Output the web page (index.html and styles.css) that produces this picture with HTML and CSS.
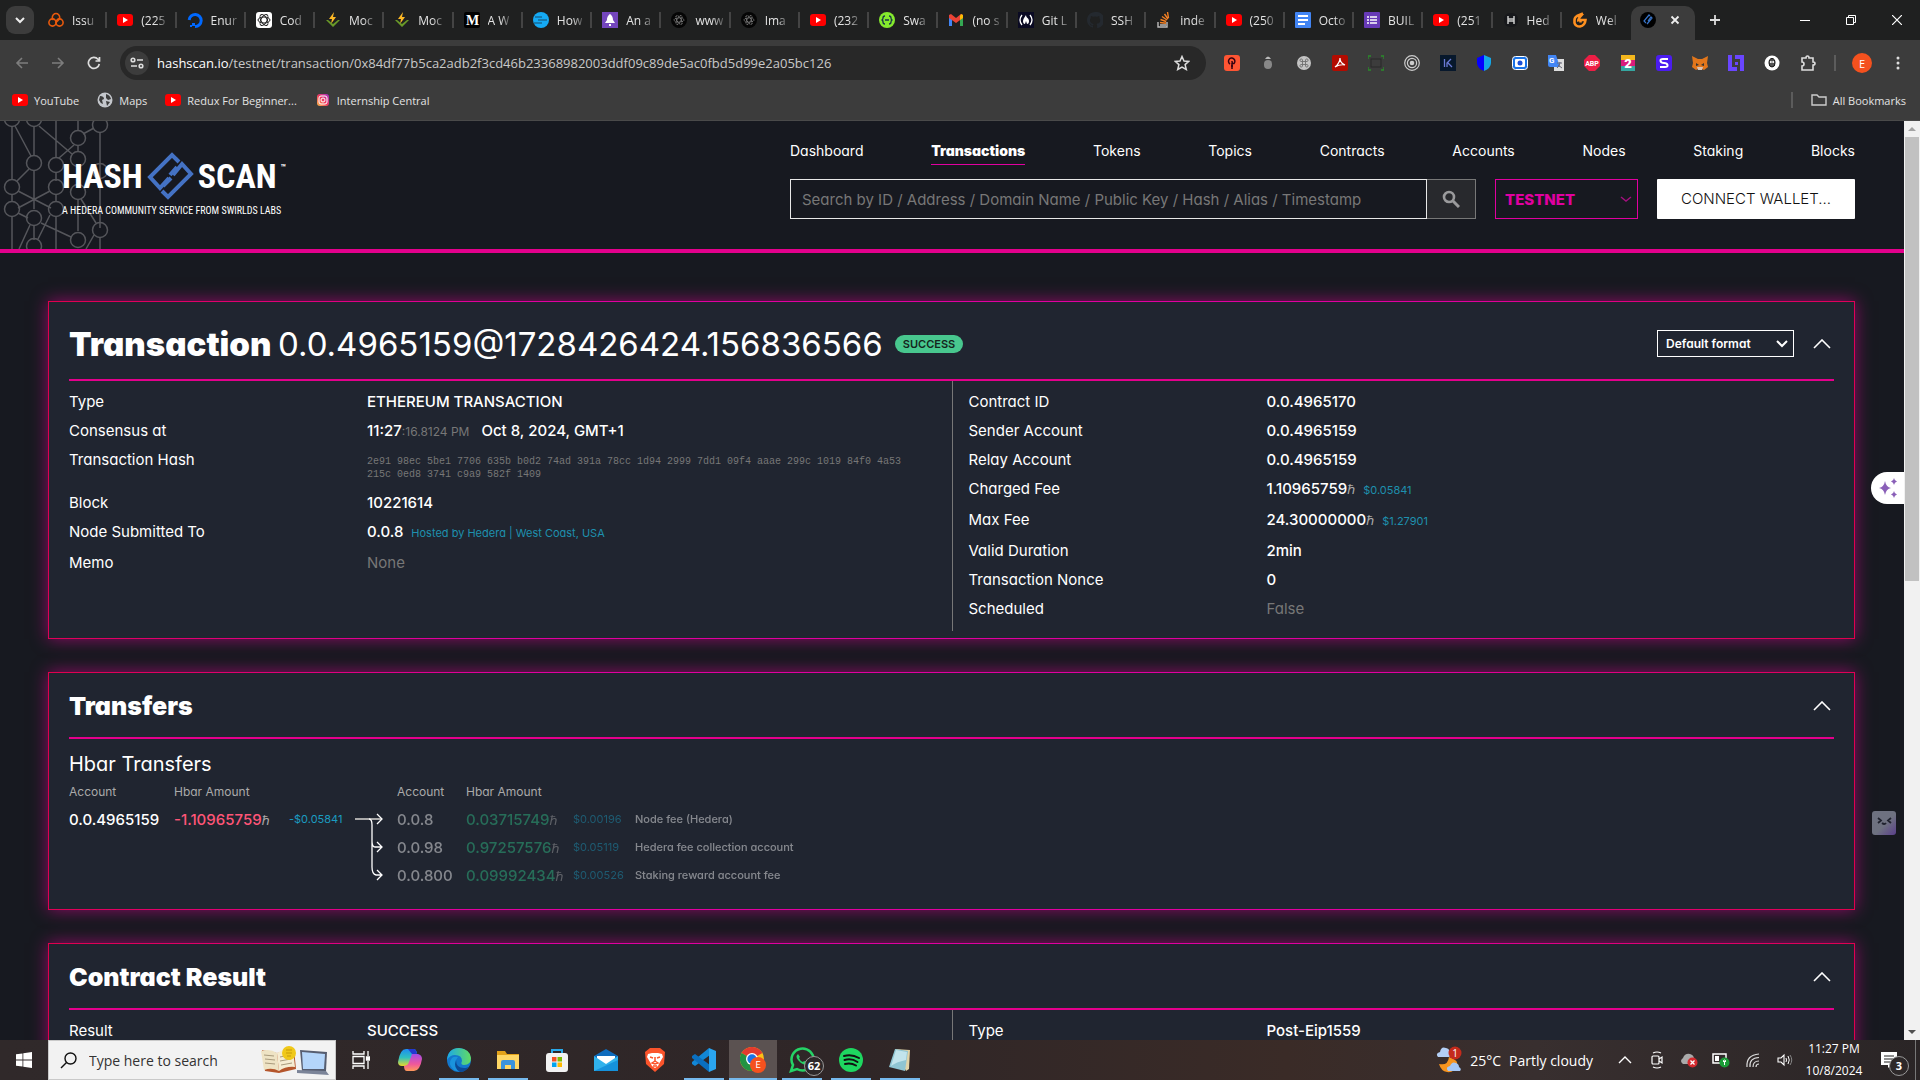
FILE: index.html
```html
<!DOCTYPE html>
<html lang="en">
<head>
<meta charset="utf-8">
<title>HashScan</title>
<link rel="stylesheet" href="styles.css">
</head>
<body>
<svg class="defs" aria-hidden="true">
  <symbol id="yt" viewBox="0 0 16 16"><rect y="2" width="16" height="12" rx="3" fill="#f00"/><path d="M6 5v6l5-3z" fill="#fff"/></symbol>
  <symbol id="moc" viewBox="0 0 16 16"><path d="M9 0 4 7h3l-1 5 5-7H8z" fill="#fdb825"/><path d="M1 8l7 7 7-7-2 0-5 4-5-4z" fill="#6a9a28"/></symbol>
  <symbol id="atom" viewBox="0 0 16 16"><circle cx="8" cy="8" r="8" fill="#050505"/><g fill="none" stroke="#aaa" stroke-width=".8" stroke-dasharray="1 .6"><ellipse cx="8" cy="8" rx="5" ry="2"/><ellipse cx="8" cy="8" rx="5" ry="2" transform="rotate(60 8 8)"/><ellipse cx="8" cy="8" rx="5" ry="2" transform="rotate(120 8 8)"/></g></symbol>
  <symbol id="up" viewBox="0 0 18 10"><path d="M1 9l8-8 8 8" fill="none" stroke="#fff" stroke-width="1.6"/></symbol>
  <symbol id="hs" viewBox="0 0 47 48"><g fill="none" stroke="#4472c4" stroke-width="4" stroke-linejoin="miter"><path d="M32 10 25 3 3 25l10 11 9-10M32 10l-3-3M23 23l7-8"/><path d="M15 39l6 6 23-23-9-10-9 11M16 34l8-8"/></g></symbol>
</svg>

<header class="browser">
  <div class="tabstrip">
    <button class="tabsearch" aria-label="Search tabs"><svg width="10" height="7" viewBox="0 0 10 7"><path d="M1 1l4 4 4-4" fill="none" stroke="#eee" stroke-width="2"/></svg></button>
    <div class="tabs">
      <div class="tab"><svg viewBox="0 0 16 16"><g fill="none" stroke="#e8590c" stroke-width="1.600"><path d="M5.500 8A3.700 3.700 0 1 1 10.500 8L8 10.500"/><circle cx="4.500" cy="10.500" r="3.600"/><circle cx="11.500" cy="10.500" r="3.600"/></g></svg><span>Issu</span></div>
      <div class="tab"><svg><use href="#yt"/></svg><span>(225</span></div>
      <div class="tab"><svg viewBox="0 0 16 16"><path d="M8 14.500A6 6 0 1 0 2.200 8" fill="none" stroke="#0069ff" stroke-width="3"/><path d="M5 11h3v3H5zM3 13h2v2H3z" fill="#0069ff"/></svg><span>Enur</span></div>
      <div class="tab"><svg viewBox="0 0 16 16"><rect width="16" height="16" rx="3" fill="#fff"/><g fill="none" stroke="#222"><ellipse cx="8" cy="8" rx="6" ry="3"/><ellipse cx="8" cy="8" rx="6" ry="3" transform="rotate(60 8 8)"/><ellipse cx="8" cy="8" rx="6" ry="3" transform="rotate(120 8 8)"/></g></svg><span>Cod</span></div>
      <div class="tab"><svg><use href="#moc"/></svg><span>Moc</span></div>
      <div class="tab"><svg><use href="#moc"/></svg><span>Moc</span></div>
      <div class="tab"><svg viewBox="0 0 16 16"><rect width="16" height="16" rx="2" fill="#000"/><text x="2" y="13" font-family="Liberation Serif" font-weight="700" font-size="14" fill="#fff">M</text></svg><span>A W</span></div>
      <div class="tab"><svg viewBox="0 0 16 16"><circle cx="8" cy="8" r="8" fill="#15aaf5"/><path d="M2 5h7M5 8h9M1 11h8" stroke="#174b6b" stroke-width="1.200"/></svg><span>How</span></div>
      <div class="tab"><svg viewBox="0 0 16 16"><rect width="16" height="16" fill="#7446bd"/><path d="M8 2c3 2 3 5 3 6l2 3H3l2-3c0-1 0-4 3-6z" fill="#fff"/><path d="M7 12h2v2H7z" fill="#fff"/></svg><span>An a</span></div>
      <div class="tab"><svg><use href="#atom"/></svg><span>www</span></div>
      <div class="tab"><svg><use href="#atom"/></svg><span>Ima</span></div>
      <div class="tab"><svg><use href="#yt"/></svg><span>(232</span></div>
      <div class="tab"><svg viewBox="0 0 16 16"><circle cx="8" cy="8" r="8" fill="#85ea2d"/><path d="M6 4q-2 0-2 2t-1.500 2q1.500 0 1.500 2t2 2M10 4q2 0 2 2t1.500 2q-1.500 0-1.500 2t-2 2M6 8h4" fill="none" stroke="#173647" stroke-width="1.300"/></svg><span>Swa</span></div>
      <div class="tab"><svg viewBox="0 0 16 16"><path d="M1 14V4h3v10z" fill="#4285f4"/><path d="M12 14V4h3v10z" fill="#34a853"/><path d="M1 3l2-1 5 4 5-4 2 1v3l-7 5-7-5z" fill="#ea4335"/><path d="M12 4l1-2 2 1v3l-3 2z" fill="#fbbc04"/></svg><span>(no s</span></div>
      <div class="tab"><svg viewBox="0 0 16 16"><rect width="16" height="16" fill="#0a0a23"/><path d="M4 3q-4 5 0 10M12 3q4 5 0 10" fill="none" stroke="#fff" stroke-width="1.300"/><path d="M8 3c0 3 3 3 3 6q0 3-2 3l-1-3-1 3q-2 0-2-3 0-2 3-6z" fill="#fff"/></svg><span>Git L</span></div>
      <div class="tab"><svg viewBox="0 0 16 16"><path d="M8 0C3.580 0 0 3.580 0 8c0 3.540 2.290 6.530 5.470 7.590.4.070.55-.17.55-.38v-1.490C3.800 14.200 3.330 12.800 3.330 12.800c-.36-.92-.89-1.200-.89-1.200 1-.3 1.600.8 1.600.8.9 1.200 2 .9 2.100.7l.5-1C3.800 11.500 3 10.300 3 8.100c0-.9.300-1.600.8-2.100l.1-2.100s.7-.2 2.200.8a7.500 7.500 0 0 1 4 0c1.500-1 2.200-.8 2.200-.8l.1 2.100c.500.5.8 1.200.8 2.100 0 3-1.800 3.700-3.600 3.900l.5 1.500v2.200c0 .2.100.5.5.4A8 8 0 0 0 8 0z" fill="#24292f"/></svg><span>SSH</span></div>
      <div class="tab"><svg viewBox="0 0 16 16"><path d="M2 10v5h9v-5M4 13h6" fill="none" stroke="#bcbbbb" stroke-width="1.400"/><path d="M4 10.500l6 .8M4.500 7.500l5.700 2M6 4.500l5 3.500M8.500 2l3.500 5M11.500 0l1 6" stroke="#f48024" stroke-width="1.400"/></svg><span>inde</span></div>
      <div class="tab"><svg><use href="#yt"/></svg><span>(250</span></div>
      <div class="tab"><svg viewBox="0 0 16 16"><rect width="16" height="16" rx="1" fill="#4285f4"/><path d="M3 4h10M3 8h10M3 12h7" stroke="#fff" stroke-width="1.800"/></svg><span>Octo</span></div>
      <div class="tab"><svg viewBox="0 0 16 16"><rect width="16" height="16" rx="1" fill="#673ab7"/><path d="M6 5h7M6 8h7M6 11h7M3 5h2M3 8h2M3 11h2" stroke="#fff" stroke-width="1.600"/></svg><span>BUIL</span></div>
      <div class="tab"><svg><use href="#yt"/></svg><span>(251</span></div>
      <div class="tab"><svg viewBox="0 0 16 16"><rect x="1" y="1" width="14" height="14" rx="6" fill="#17181b"/><path d="M5 4v8M11 4v8M5 7h6M5 9h6" stroke="#ccc" stroke-width="1.500"/></svg><span>Hed</span></div>
      <div class="tab last"><svg viewBox="0 0 16 16"><path d="M11 1.500 5 4Q2.500 5.500 2.500 8v3q1 3.500 5.500 3.500 5-1 5.500-6.500H8.500v2.500M11 1.500 7.500 5.500Q6 8 6.500 9.500" fill="none" stroke="#ff9020" stroke-width="2.600"/></svg><span>Wel</span></div>
      <div class="tab active"><svg viewBox="0 0 16 16"><circle cx="8" cy="8" r="8" fill="#000"/><path d="M6 11 4 9l5-6 1 1M7 12l5-6-1-1-3 4" fill="none" stroke="#3874c8" stroke-width="1.200"/></svg><button aria-label="Close tab"><svg viewBox="0 0 10 10"><path d="M1.500 1.500l7 7M8.500 1.500l-7 7" stroke="#eee" stroke-width="1.800"/></svg></button></div>
    </div>
    <button class="newtab" aria-label="New tab"><svg width="12" height="12" viewBox="0 0 12 12"><path d="M6 1v10M1 6h10" stroke="#ddd" stroke-width="1.800"/></svg></button>
    <div class="wincontrols">
      <button aria-label="Minimize"><svg viewBox="0 0 10 10"><path d="M0 5.500h10" stroke="#fff"/></svg></button>
      <button aria-label="Restore"><svg viewBox="0 0 10 10"><path d="M.5 2.500h7v7h-7zM2.500 2.500v-2h7v7h-2" fill="none" stroke="#fff"/></svg></button>
      <button aria-label="Close"><svg viewBox="0 0 10 10"><path d="M0 0l10 10M10 0L0 10" stroke="#fff" stroke-width="1.200"/></svg></button>
    </div>
  </div>

  <div class="toolbar">
    <button class="nav dim" aria-label="Back"><svg viewBox="0 0 14 14"><path d="M13 7H2M7 2 2 7l5 5" fill="none" stroke="currentColor" stroke-width="1.600"/></svg></button>
    <button class="nav dim" aria-label="Forward"><svg viewBox="0 0 14 14"><path d="M1 7h11M7 2l5 5-5 5" fill="none" stroke="currentColor" stroke-width="1.600"/></svg></button>
    <button class="nav" aria-label="Reload"><svg viewBox="0 0 14 14"><path d="M12.300 8A5.500 5.500 0 1 1 11 3.200l1.500 1.500M12.500 1v4h-4" fill="none" stroke="currentColor" stroke-width="1.700"/></svg></button>
    <div class="omnibox">
      <span class="site"><svg width="14" height="14" viewBox="0 0 14 14"><g fill="none" stroke="#ddd" stroke-width="1.600"><circle cx="3" cy="4" r="1.800"/><path d="M7 4h6M1 10h6"/><circle cx="11" cy="10" r="1.800"/></g></svg></span>
      <span class="url"><b>hashscan.io</b>/testnet/transaction/0x84df77b5ca2adb2f3cd46b23368982003ddf09c89de5ac0fbd5d99e2a05bc126</span>
      <svg class="star" width="16" height="16" viewBox="0 0 16 16"><path d="M8 1.500l2 4.500 4.800.4-3.700 3.200 1.200 4.900L8 12l-4.300 2.500 1.200-4.900L1.200 6.400 6 6z" fill="none" stroke="#ddd" stroke-width="1.500"/></svg>
    </div>
    <div class="exts">
      <svg viewBox="0 0 16 16"><rect width="16" height="16" rx="3" fill="#ff5533"/><path d="M8 14V8M6 9a3.200 3.200 0 1 1 4-.5Q8 9 8 6M7 11h2" fill="none" stroke="#301" stroke-width="1.500"/></svg>
      <svg viewBox="0 0 16 16"><path d="M5 4q3-5 6 0z" fill="#bbb"/><rect x="4" y="5" width="8" height="9" rx="4" fill="#888"/></svg>
      <svg viewBox="0 0 16 16"><circle cx="8" cy="8" r="7" fill="#c4c4c4"/><path d="M6.500 6.500h3v3h-3zM6.500 6.500V5A1.300 1.300 0 1 0 5 6.500zM9.500 6.500H11A1.300 1.300 0 1 0 9.500 5zM9.500 9.500V11a1.300 1.300 0 1 0 1.500-1.500zM6.500 9.500H5A1.300 1.300 0 1 0 6.500 11z" fill="none" stroke="#666" stroke-width=".8"/></svg>
      <svg viewBox="0 0 16 16"><rect width="16" height="16" rx="2" fill="#b30b00"/><path d="M3 12q5-4 5-9 0 5 5 7-5-1-10 2z" fill="none" stroke="#fff" stroke-width="1.200"/></svg>
      <svg viewBox="0 0 16 16"><rect x="3" y="4" width="10" height="8" fill="none" stroke="#292929"/><path d="M0 4V1h3M13 1h3v3M16 12v3h-3M3 15H0v-3" fill="none" stroke="#2a8a2a" stroke-width="1.400"/></svg>
      <svg viewBox="0 0 16 16"><g fill="none" stroke="#ccc" stroke-width="1.200"><circle cx="8" cy="8" r="7.300"/><circle cx="8" cy="8" r="4.600"/></g><circle cx="8" cy="8" r="2.300" fill="#ccc"/></svg>
      <svg viewBox="0 0 16 16"><rect width="16" height="16" fill="#07182c"/><path d="M4.500 4v8M7 12V8l4-4M8 8l4 4" fill="none" stroke="#6a7ad6" stroke-width="1.300"/></svg>
      <svg viewBox="0 0 16 16"><path d="M8 0 1 3v5q0 5 7 8z" fill="#0500ff"/><path d="M8 0l7 3v5q0 5-7 8z" fill="#13a7e8"/></svg>
      <svg viewBox="0 0 16 16"><rect x=".5" y="1.500" width="15" height="13" rx="3" fill="#1a73e8" stroke="#fff"/><rect x="3" y="4" width="10" height="8" rx="1" fill="#fff"/><circle cx="8" cy="8" r="2.500" fill="#1a4fd8"/></svg>
      <svg viewBox="0 0 16 16"><rect x="6" y="4" width="10" height="12" fill="#ddd"/><path d="M0 0h8l4 12H2q-2 0-2-2z" fill="#4285f4"/><text x="1" y="8" font-family="Roboto" font-weight="700" font-size="8" fill="#fff">G</text><path d="M9 8h5M12 7q0 4-3 6M10 10l4 3" stroke="#667" fill="none"/></svg>
      <svg viewBox="0 0 16 16"><path d="M5 0h6l5 5v6l-5 5H5l-5-5V5z" fill="#ed1e45"/><text x="8" y="11" text-anchor="middle" font-family="Roboto" font-weight="700" font-size="7" fill="#fff">ABP</text></svg>
      <svg viewBox="0 0 16 16"><path d="M1 0h14v6H1z" fill="#f4b71d"/><path d="M1 5h14v6H1z" fill="#d91c7b"/><path d="M1 11h14v5H1z" fill="#35a6a0"/><text x="8" y="13" text-anchor="middle" font-family="Roboto" font-weight="900" font-size="13" fill="#fff">2</text></svg>
      <svg viewBox="0 0 16 16"><rect width="16" height="16" rx="3" fill="#4b1cf0"/><path d="M12 4H7Q4 4 4.500 6t3.500 2 3.500 2-2.500 2H4" fill="none" stroke="#fff" stroke-width="2"/></svg>
      <svg viewBox="0 0 16 16"><path d="M0 1l6 3h4l6-3-1 7 1 4-4 3-2-1H6l-2 1-4-3 1-4z" fill="#e2761b"/><path d="M4 8l3 2-3 1zM12 8l-3 2 3 1z" fill="#333"/><path d="M5 12h6l-1 3H6z" fill="#d7c1b3"/></svg>
      <svg viewBox="0 0 16 16"><path d="M0 0h4v12h5v4H0zM16 16h-4V4H7V0h9zM7 7h3v3H7z" fill="#6a46ff"/></svg>
      <svg viewBox="0 0 16 16"><circle cx="8" cy="8" r="7.500" fill="#fff"/><path d="M8 3.500q3 0 3 4.500 0 4-3 4T5 8q0-4.500 3-4.500z" fill="#555" stroke="#111"/><circle cx="6.800" cy="7" r="1" fill="#fff"/><circle cx="9.200" cy="7" r="1" fill="#fff"/></svg>
      <svg viewBox="0 0 16 16"><path d="M2 3h4q0-2 1.500-2T9 3h4v4q2 0 2 1.500T13 10v5H2v-4q2 0 2-2T2 7z" fill="none" stroke="#ddd" stroke-width="1.600"/></svg>
    </div>
    <i class="vsep"></i>
    <span class="avatar">E</span>
    <button class="dots" aria-label="Menu"><svg width="4" height="14" viewBox="0 0 4 14"><circle cx="2" cy="2" r="1.500" fill="#ddd"/><circle cx="2" cy="7" r="1.500" fill="#ddd"/><circle cx="2" cy="12" r="1.500" fill="#ddd"/></svg></button>
  </div>

  <nav class="bookmarks">
    <a href="#"><svg><use href="#yt"/></svg>YouTube</a>
    <a href="#"><svg viewBox="0 0 16 16"><circle cx="8" cy="8" r="7.500" fill="#c4c7cc"/><path d="M3 4q4 0 4 3l-2 1 1 4q-3-1-4-4zM9 2q4 1 5 5l-3 1-2-2zM9 9l4 1-3 4z" fill="#3c3c3c"/></svg>Maps</a>
    <a href="#"><svg><use href="#yt"/></svg>Redux For Beginner...</a>
    <a href="#"><svg viewBox="0 0 16 16"><linearGradient id="ig" x1="0" y1="1" x2="1" y2="0"><stop stop-color="#fdc04a"/><stop offset=".5" stop-color="#ee3a63"/><stop offset="1" stop-color="#a033c8"/></linearGradient><rect x="2" y="2" width="12" height="12" rx="3" fill="url(#ig)"/><rect x="4" y="4" width="8" height="8" rx="2" fill="none" stroke="#fff"/><circle cx="8" cy="8" r="2" fill="none" stroke="#fff"/></svg>Internship Central</a>
    <i class="vsep push"></i>
    <a href="#"><svg viewBox="0 0 16 16"><path d="M1 13V3h5l2 2h7v8z" fill="none" stroke="#ccc" stroke-width="1.400"/></svg>All Bookmarks</a>
  </nav>
</header>

<div class="viewport">
  <div class="site-page">
    <header class="site-header">
      <svg class="mesh" width="112" height="128" viewBox="0 0 112 128" fill="none" stroke="#55565b" stroke-width="1.500">
        <path d="M12 5v54M12 74v6M12 96v32M34 5v30M34 50v38M34 105v14M56 0v36M56 52v8M56 74v6M56 96v32M78 0v10M78 24v6M78 78v32M100 12v95M100 117v11M15 5l16 30M39 5l33 28M83 13l11-6M74 24 59 37M29 48 17 60M18 70l33 17M50 70 18 87M18 92l10 5M41 102l30 14M50 94l-12 24M30 104l-11 24M81 78l15 24M94 114l-8 14"/>
        <circle cx="12" cy="-2" r="7.500"/><circle cx="34" cy="-2" r="7.500"/><circle cx="100" cy="4" r="7.500"/><circle cx="78" cy="17" r="7.500"/><circle cx="78" cy="38" r="7.500"/><circle cx="34" cy="42" r="7.500"/><circle cx="56" cy="44" r="7.500"/><circle cx="12" cy="66" r="7.500"/><circle cx="56" cy="66" r="7.500"/><circle cx="12" cy="88" r="7.500"/><circle cx="56" cy="88" r="7.500"/><circle cx="34" cy="97" r="7.500"/><circle cx="78" cy="71" r="7.500"/><circle cx="100" cy="109" r="7.500"/><circle cx="78" cy="119" r="7.500"/><circle cx="34" cy="125" r="7.500"/><circle cx="100" cy="50" r="7.500"/>
      </svg>
      <a class="logo" href="#">
        <span class="mark"><span>HASH</span><svg width="47" height="48"><use href="#hs"/></svg><span>SCAN</span><sup>™</sup></span>
        <span class="tagline">A HEDERA COMMUNITY SERVICE FROM SWIRLDS LABS</span>
      </a>
      <div class="head-right">
        <nav class="mainnav">
          <a href="#">Dashboard</a><a href="#" class="current">Transactions</a><a href="#">Tokens</a><a href="#">Topics</a><a href="#">Contracts</a><a href="#">Accounts</a><a href="#">Nodes</a><a href="#">Staking</a><a href="#">Blocks</a>
        </nav>
        <form class="searchrow">
          <input type="text" aria-label="Search" placeholder="Search by ID / Address / Domain Name / Public Key / Hash / Alias / Timestamp">
          <button type="button" class="go" aria-label="Search"><svg width="18" height="18" viewBox="0 0 18 18"><circle cx="7" cy="7" r="5" fill="none" stroke="#9a9a9c" stroke-width="2.600"/><path d="M11 11l6 6" stroke="#9a9a9c" stroke-width="3"/></svg></button>
          <span class="net"><select aria-label="Network"><option>TESTNET</option></select><svg width="12" height="7" viewBox="0 0 12 7"><path d="M1 1l5 4 5-4" fill="none" stroke="#a3107e" stroke-width="1.400"/></svg></span>
          <button type="button" class="wallet">CONNECT WALLET...</button>
        </form>
      </div>
    </header>

    <main>
      <section class="card">
        <div class="card-head big">
          <h1>Transaction <span>0.0.4965159@1728426424.156836566</span></h1>
          <span class="badge">SUCCESS</span>
          <span class="format"><select aria-label="Format"><option>Default format</option></select><svg width="12" height="8" viewBox="0 0 12 8"><path d="M1 1l5 5 5-5" fill="none" stroke="#fff" stroke-width="2"/></svg></span>
          <button class="fold" aria-label="Collapse"><svg width="18" height="10"><use href="#up"/></svg></button>
        </div>
        <div class="split">
          <dl>
            <dt>Type</dt><dd>ETHEREUM TRANSACTION</dd>
            <dt>Consensus at</dt><dd>11:27<small class="grey">:16.8124 PM</small><span class="date">Oct 8, 2024, GMT+1</span></dd>
            <dt class="tall">Transaction Hash</dt><dd class="hash">2e91 98ec 5be1 7706 635b b0d2 74ad 391a 78cc 1d94 2999 7dd1 09f4 aaae 299c 1019 84f0 4a53 215c 0ed8 3741 c9a9 582f 1409</dd>
            <dt>Block</dt><dd>10221614</dd>
            <dt class="fee">Node Submitted To</dt><dd class="fee">0.0.8<small class="blue">Hosted by Hedera | West Coast, USA</small></dd>
            <dt>Memo</dt><dd class="none">None</dd>
          </dl>
          <dl>
            <dt>Contract ID</dt><dd>0.0.4965170</dd>
            <dt>Sender Account</dt><dd>0.0.4965159</dd>
            <dt>Relay Account</dt><dd>0.0.4965159</dd>
            <dt class="fee">Charged Fee</dt><dd class="fee">1.10965759<i class="h">ℏ</i><small class="blue">$0.05841</small></dd>
            <dt class="fee">Max Fee</dt><dd class="fee">24.30000000<i class="h">ℏ</i><small class="blue">$1.27901</small></dd>
            <dt>Valid Duration</dt><dd>2min</dd>
            <dt>Transaction Nonce</dt><dd>0</dd>
            <dt>Scheduled</dt><dd class="none">False</dd>
          </dl>
        </div>
      </section>

      <section class="card">
        <div class="card-head"><h2>Transfers</h2><button class="fold" aria-label="Collapse"><svg width="18" height="10"><use href="#up"/></svg></button></div>
        <h3>Hbar Transfers</h3>
        <table class="transfers">
          <colgroup><col class="c1"><col class="c2"><col class="c3"><col class="c4"><col class="c5"><col class="c6"><col class="c7"><col></colgroup>
          <thead><tr><th>Account</th><th>Hbar Amount</th><th></th><th></th><th>Account</th><th>Hbar Amount</th><th></th><th></th></tr></thead>
          <tbody>
            <tr><td>0.0.4965159</td><td class="red">-1.10965759<i class="h">ℏ</i></td><td class="usd">-$0.05841</td>
              <td rowspan="3"><svg class="arrows" width="28" height="84" viewBox="0 0 28 84" fill="none" stroke="#fff"><path d="M0 14h27" stroke="#aaa" stroke-width="2"/><path d="M14 14q3 0 3 6v16q0 6 3 6h7M17 34v28q0 7 4 8h6M22 9l5 5-5 5M22 37l5 5-5 5M22 65l5 5-5 5" stroke-width="1.300"/></svg></td>
              <td class="dim">0.0.8</td><td class="dim green">0.03715749<i class="h">ℏ</i></td><td class="dim usd">$0.00196</td><td class="dim note">Node fee (Hedera)</td></tr>
            <tr><td></td><td></td><td></td><td class="dim">0.0.98</td><td class="dim green">0.97257576<i class="h">ℏ</i></td><td class="dim usd">$0.05119</td><td class="dim note">Hedera fee collection account</td></tr>
            <tr><td></td><td></td><td></td><td class="dim">0.0.800</td><td class="dim green">0.09992434<i class="h">ℏ</i></td><td class="dim usd">$0.00526</td><td class="dim note">Staking reward account fee</td></tr>
          </tbody>
        </table>
      </section>

      <section class="card">
        <div class="card-head"><h2>Contract Result</h2><button class="fold" aria-label="Collapse"><svg width="18" height="10"><use href="#up"/></svg></button></div>
        <div class="split">
          <dl><dt>Result</dt><dd>SUCCESS</dd></dl>
          <dl><dt>Type</dt><dd>Post-Eip1559</dd></dl>
        </div>
      </section>
    </main>
  </div>
  <div class="scrollbar"><svg width="8" height="4" viewBox="0 0 8 4"><path d="M0 4l4-4 4 4z" fill="#a3a3a3"/></svg><div class="track"><div class="thumb"></div></div><svg width="8" height="4" viewBox="0 0 8 4"><path d="M0 0l4 4 4-4z" fill="#505050"/></svg></div>
  <button class="spark" aria-label="Assistant"><svg width="20" height="20" viewBox="0 0 20 20" fill="#8a5fb8"><path d="M7 3q1 6 6 7-5 1-6 7-1-6-6-7 5-1 6-7zM16 0q.5 3 3 3.500-2.500.5-3 3.500-.5-3-3-3.500 2.500-.5 3-3.500zM16 13q.5 3 3 3.500-2.500.5-3 3.500-.5-3-3-3.500 2.500-.5 3-3.500z"/></svg></button>
  <button class="face" aria-label="Helper"><svg width="24" height="24" viewBox="0 0 24 24"><path d="M6 7l3 2.500L6 12M19 7l-3 2.500 3 2.500M10 12q2.500 2 4 0" fill="none" stroke="#20222e" stroke-width="1.800"/></svg></button>
</div>

<footer class="taskbar">
  <button class="start" aria-label="Start"><svg width="16" height="16" viewBox="0 0 16 16" fill="#fff"><path d="M0 2.300 6.500 1.400V7.600H0zM7.300 1.300 16 0v7.600H7.300zM0 8.400h6.500v6.200L0 13.700zM7.300 8.400H16V16l-8.700-1.300z"/></svg></button>
  <label class="tasksearch">
    <svg width="17" height="17" viewBox="0 0 17 17"><circle cx="10.500" cy="6.500" r="5.500" fill="none" stroke="#111" stroke-width="1.400"/><path d="M6.500 10.500 1 16" stroke="#111" stroke-width="1.500"/></svg>
    <input type="text" placeholder="Type here to search">
    <svg width="70" height="30" viewBox="0 0 70 30"><path d="M2 5l15 3 17-4 2 20-17 4-14-2z" fill="#b5562c"/><path d="M1 6q9-3 16 2l2 18q-7-4-15-1z" fill="#eee3c4"/><path d="M17 8q7-4 16-3l2 17q-9-1-16 4z" fill="#f5ecd2"/><path d="M4 10l10 1M5 14l10 1M5 18l10 1M20 12l10-2M20 16l11-2M21 20l11-2" stroke="#a89a7c"/><circle cx="29" cy="8" r="7" fill="#f0c818"/><path d="M26 5h6M26 8h6M27 11h4" stroke="#c79a08"/><path d="M40 5l27 2-1 19H42z" fill="#565d70"/><path d="M42 7l23 2-1 15H43z" fill="#b4d5fa"/><path d="M37 25l29 1 3 4-32-2z" fill="#7b8498"/></svg>
  </label>
  <div class="apps">
    <button aria-label="Task view"><svg width="18" height="20" viewBox="0 0 18 20" fill="none" stroke="#fff" stroke-width="1.300"><path d="M1 1v3h11V1M1 6.500h11v7H1zM1 19v-3h11v3M16 1v5M16 11v8"/><path d="M14.500 7h3v3h-3z" fill="#fff"/></svg></button>
    <button aria-label="Copilot"><svg width="24" height="24" viewBox="0 0 24 24"><linearGradient id="cpa" x1="0" y1="0" x2="0" y2="1"><stop stop-color="#1d8cf0"/><stop offset=".5" stop-color="#2fc0c0"/><stop offset="1" stop-color="#e8d92a"/></linearGradient><linearGradient id="cpb" x1="0" y1="0" x2="0" y2="1"><stop stop-color="#a34be8"/><stop offset=".6" stop-color="#f0589a"/><stop offset="1" stop-color="#ff9a5a"/></linearGradient><path d="M8 1h8q2 0 3 4l-4 1-3 10q-1 2-3 2H4q-4 0-4-4Q2 1 8 1z" fill="url(#cpa)"/><path d="M16 23H9q-3 0-3-5l3-1q1 0 2-3l3-8h6q4 1 4 5-2 12-8 12z" fill="url(#cpb)"/><path d="M10 1h6q2 0 3 5h-5z" fill="#2338d0"/></svg></button>
    <button class="open" aria-label="Edge"><svg width="24" height="24" viewBox="0 0 24 24"><linearGradient id="eg"><stop stop-color="#1ba8e8"/><stop offset="1" stop-color="#62dc62"/></linearGradient><circle cx="12" cy="12" r="12" fill="#1377cc"/><path d="M0 12Q1 0 12 0q11 1 12 10 0 7-7 7-4 0-2-4 0-6-7-6-5 0-8 5z" fill="url(#eg)"/><path d="M9 12q-3 9 6 11-4 1-8-1-7-6-2-12 2-2 6-1z" fill="#1a93dd"/><path d="M9 12q0 8 8 8 4 0 5-2-3 6-9 6-7-4-4-12z" fill="#0c4a96"/></svg></button>
    <button class="open" aria-label="File Explorer"><svg width="24" height="24" viewBox="0 0 24 24"><path d="M1 3h8l2 3h12v15H1z" fill="#e3a21a"/><path d="M1 7h22v14H1z" fill="#ffd765"/><path d="M5 21v-7q0-2 2-2h10q2 0 2 2v7h-4v-4H9v4z" fill="#3a93dc"/></svg></button>
    <button aria-label="Store"><svg width="24" height="24" viewBox="0 0 24 24"><path d="M7 6V2h10v4" fill="none" stroke="#29a9ea" stroke-width="2"/><rect x="1" y="5" width="22" height="19" rx="3" fill="#f2f2f2"/><path d="M7 9h4.500v4.500H7z" fill="#f25022"/><path d="M12.500 9H17v4.500h-4.500z" fill="#7fba00"/><path d="M7 14.500h4.500V19H7z" fill="#00a4ef"/><path d="M12.500 14.500H17V19h-4.500z" fill="#ffb900"/></svg></button>
    <button aria-label="Mail"><svg width="24" height="24" viewBox="0 0 24 24"><path d="M0 8 12 1l12 7v15H0z" fill="#0f6cbd"/><path d="M3 8h18v8H3z" fill="#fff"/><path d="M0 8l12 8 12-8v15H0z" fill="#30b2ec"/><path d="M0 23l24-11v11z" fill="#1592dc"/></svg></button>
    <button aria-label="Brave"><svg width="22" height="24" viewBox="0 0 22 24"><path d="M6 0h10l5 4-1 12-9 8-9-8L1 4z" fill="#fb542b"/><path d="M4 6l4-1h6l4 1 1 3-3 5-2 4-3 2-3-2-2-4-3-5z" fill="#fff"/><path d="M6 9l3 1M16 9l-3 1M11 9v4l-3 2 3 1 3-1-3-2M9 18h4" fill="none" stroke="#fb542b" stroke-width="1.500"/></svg></button>
    <button class="open" aria-label="VS Code"><svg width="24" height="24" viewBox="0 0 24 24"><path d="M17 0l1 7L3 18l-3-2v-2z" fill="#1287d6"/><path d="M17 24l1-7L3 6 0 8v2z" fill="#0a6fc0"/><path d="M17 0l7 3v18l-7 3z" fill="#2aa5f0"/></svg></button>
    <button class="open current" aria-label="Chrome"><svg width="26" height="26" viewBox="0 0 26 26"><circle cx="12" cy="12" r="12" fill="#fbc116"/><path d="M12 12 1.600 6A12 12 0 0 1 22.400 6z" fill="#e33b2e"/><path d="M12 12 1.600 6A12 12 0 0 0 12 24l5-9z" fill="#229342"/><circle cx="12" cy="12" r="6" fill="#fff"/><circle cx="12" cy="12" r="4.700" fill="#1a73e8"/><circle cx="18" cy="18" r="8" fill="#f4511e"/><text x="18" y="21" text-anchor="middle" font-family="Roboto" font-size="9" fill="#fff">E</text></svg></button>
    <button class="open wa" aria-label="WhatsApp"><svg width="26" height="26" viewBox="0 0 26 26"><path d="M2 24l2-6a11 11 0 1 1 4 4z" fill="none" stroke="#25d366" stroke-width="2.500"/><path d="M9 7q-3 2 0 6t7 5q3-1 2-3l-3-1-1 1q-3-1-4-4l1-1z" fill="#25d366"/></svg><b>62</b></button>
    <button class="open" aria-label="Spotify"><svg width="24" height="24" viewBox="0 0 24 24"><circle cx="12" cy="12" r="12" fill="#1ed760"/><path d="M5 8q8-2 15 2M5.500 12q7-2 13 2M6 16q6-1.500 11 1.500" fill="none" stroke="#111" stroke-width="2" stroke-linecap="round"/></svg></button>
    <button class="open" aria-label="Notepad"><svg width="24" height="24" viewBox="0 0 24 24"><path d="M7 1l15 1-1 19-3 2z" fill="#e0d3a8"/><path d="M7 1l13 2-3 20L1 19z" fill="#8fc5d3"/><path d="M8 2l11 2-1 8Q8 14 3 18z" fill="#c2e4ec"/></svg></button>
  </div>
  <div class="tray">
    <div class="weather"><svg width="26" height="28" viewBox="0 0 26 28"><path d="M3 18q9 2 10-7 10 3 8 9-3 7-10 6-6-1-8-8z" fill="#f7941e"/><path d="M2 11q-3-4 2-5 1-6 6-4 4 1 3 4 3 3 0 5z" fill="#b3cff5"/><path d="M12 25q-3-4 2-5 2-5 6-3 3 1 3 4 3 2 1 4z" fill="#a5c7f5"/><circle cx="19" cy="7" r="6.500" fill="#c42b1c"/><text x="19" y="11" text-anchor="middle" font-family="Open Sans" font-size="10" fill="#fff">1</text></svg><span>25°C</span><span>Partly cloudy</span></div>
    <button aria-label="Hidden icons"><svg width="14" height="8" viewBox="0 0 14 8"><path d="M1 7l6-6 6 6" fill="none" stroke="#fff" stroke-width="1.400"/></svg></button>
    <button aria-label="Meet now"><svg width="14" height="18" viewBox="0 0 14 18"><g fill="none" stroke="#fff" stroke-width="1.200"><rect x="2" y="5" width="7" height="8" rx="1"/><path d="M9 8l3-2v6l-3-2M3 2q4-2 8 0M3 16q4 2 8 0"/></g></svg></button>
    <button aria-label="OneDrive"><svg width="18" height="16" viewBox="0 0 18 16"><path d="M3 12q-4-3 0-6 2-5 7-4 4 1 4 5l-3 5z" fill="#aaa"/><circle cx="12.500" cy="10.500" r="5" fill="#d42a2f"/><path d="M10.500 8.500l4 4M14.500 8.500l-4 4" stroke="#fff" stroke-width="1.300"/></svg></button>
    <button aria-label="Battery"><svg width="18" height="16" viewBox="0 0 18 16"><path d="M1 2h13v9H1z" fill="none" stroke="#fff" stroke-width="1.500"/><path d="M3 4h4v5H3z" fill="#fff"/><circle cx="12.500" cy="10.500" r="5" fill="#1b9c37"/><path d="M12.500 13V9M11 9q1.500-2 3 0-1.500 3-3 0z" stroke="#fff" fill="none"/></svg></button>
    <button aria-label="Wi-Fi"><svg width="16" height="16" viewBox="0 0 16 16"><g fill="none" stroke="#ddd" stroke-width="1.200"><path d="M2 15Q1 3 14 2M5 15Q4 6 14 5.500M8 15q0-6 6-6M11 15q0-3 3-3"/></g></svg></button>
    <button aria-label="Volume"><svg width="16" height="14" viewBox="0 0 16 14"><path d="M1 5h3l3-3v10L4 9H1z" fill="none" stroke="#fff" stroke-width="1.100"/><path d="M9 5q1 2 0 4M11 3q2.500 4 0 8" fill="none" stroke="#fff"/><path d="M13 2q3.500 5 0 10" fill="none" stroke="#888"/></svg></button>
    <div class="clock"><span>11:27 PM</span><span>10/8/2024</span></div>
    <button class="notif" aria-label="Notifications"><svg width="18" height="18" viewBox="0 0 18 18"><path d="M1 1h16v13h-6l-3 3v-3H1z" fill="#fff"/><path d="M4 5h10M4 8h10M4 11h6" stroke="#222" stroke-width="1.200"/></svg><b>3</b></button>
  </div>
</footer>
</body>
</html>
```
FILE: styles.css
```css
* { box-sizing: border-box; }
html, body { height: 100%; }
body {
  margin: 0;
  display: flex;
  flex-direction: column;
  overflow: hidden;
  background: #171920;
  color: #fff;
  font-family: "Open Sans", "Noto Sans", sans-serif;
}
button, input, select { font: inherit; color: inherit; }
button { border: 0; padding: 0; background: none; display: flex; align-items: center; justify-content: center; }
a { color: inherit; text-decoration: none; }
svg { display: block; flex: none; }
.defs { position: absolute; width: 0; height: 0; }

/* Browser frame */
.browser { background: #3c3c3c; border-bottom: 1px solid #4a4a4a; flex: none; font-size: 12px; color: #e3e3e3; }
.tabstrip { display: flex; align-items: center; height: 40px; background: #1f2020; padding-left: 6px; }
.tabsearch { width: 28px; height: 28px; border-radius: 9px; background: #3c3c3c; margin-right: 4px; }
.tabs { flex: 1; display: flex; align-items: flex-end; height: 40px; min-width: 0; }
.tab { flex: 1 1 0; min-width: 0; height: 34px; display: flex; align-items: center; gap: 8px; padding: 0 3px 6px 10px; position: relative; }
.tab > svg { width: 16px; height: 16px; }
.tab span { white-space: nowrap; -webkit-mask-image: linear-gradient(90deg, #000 60%, rgba(0, 0, 0, .3)); mask-image: linear-gradient(90deg, #000 60%, rgba(0, 0, 0, .3)); }
.tab::after { content: ""; position: absolute; right: 0; top: 6px; width: 2px; height: 16px; background: #444; }
.tab.active::after, .tab.last::after { display: none; }
.tab.active { flex: 0 0 64px; margin-right: 6px; padding: 0 9px 6px; gap: 14px; background: #3c3c3c; border-radius: 10px 10px 0 0; }
.tab.active button svg { width: 10px; height: 10px; }
.newtab { width: 28px; height: 28px; }
.wincontrols { display: flex; margin-left: 53px; }
.wincontrols button { width: 46px; height: 40px; }
.wincontrols svg { width: 10px; height: 10px; }
.toolbar { display: flex; align-items: center; height: 46px; padding: 0 14px 0 4px; }
.nav { width: 36px; height: 34px; color: #ddd; }
.nav.dim { color: #7d7d7d; }
.nav svg { width: 14px; height: 14px; }
.omnibox { flex: 1; display: flex; align-items: center; height: 34px; margin: 0 18px 0 8px; padding: 0 16px 0 5px; border-radius: 17px; background: #282828; gap: 8px; }
.site { width: 24px; height: 24px; border-radius: 50%; background: #3c3c3c; display: grid; place-items: center; }
.url { flex: 1; font-size: 13px; color: #c9c9c9; white-space: nowrap; }
.url b { font-weight: 400; color: #fff; }
.exts { display: flex; gap: 20px; }
.exts svg { width: 16px; height: 16px; }
.vsep { width: 2px; height: 16px; background: #5c5c5c; margin: 0 16px 0 18px; }
.avatar { width: 20px; height: 20px; border-radius: 50%; background: #f4511e; color: #fff; display: grid; place-items: center; font-size: 11px; }
.dots { width: 16px; height: 24px; margin-left: 18px; }
.bookmarks { display: flex; align-items: center; height: 34px; padding: 0 14px 6px 12px; font-size: 11px; gap: 18px; }
.bookmarks a { display: flex; align-items: center; gap: 6px; }
.bookmarks svg { width: 16px; height: 16px; }
.bookmarks .push { margin: 0 0 0 auto; }

/* Page viewport */
.viewport { flex: 1; min-height: 0; display: flex; position: relative; }
.site-page { flex: 1; min-width: 0; overflow: hidden; font-family: Inter, "Noto Sans", sans-serif; font-feature-settings: "cv11"; font-size: 15px; }
.site-header { position: relative; display: flex; justify-content: space-between; align-items: flex-start; height: 132px; padding: 0 49px 0 62px; border-bottom: 4px solid #e3008c; }
.mesh { position: absolute; left: 0; top: 0; }
.logo { position: relative; padding-top: 31px; font-family: "Liberation Sans Narrow", "Roboto Condensed", "DejaVu Sans Condensed", sans-serif; }
.mark { display: flex; align-items: center; gap: 4px; font-size: 34px; font-weight: 700; line-height: 48px; }
.mark sup { font-size: 10px; line-height: 8px; align-self: flex-start; margin-top: 12px; }
.tagline { display: block; font-size: 10px; line-height: 12px; margin-top: 5px; white-space: nowrap; }
.head-right { width: 59.4%; display: flex; flex-direction: column; gap: 14px; padding-top: 16px; }
.mainnav { display: flex; justify-content: space-between; font-size: 14px; line-height: 28px; }
.mainnav a { height: 28px; }
.mainnav .current { font-weight: 900; border-bottom: 1px solid #e000a0; }
.searchrow { display: flex; height: 40px; margin: 0; }
.searchrow input { flex: 1; min-width: 0; padding: 0 11px; background: transparent; border: 1px solid #e8e8e8; outline: 0; }
.searchrow input::placeholder { color: #777; opacity: 1; }
.go { width: 49px; background: #28292d; border: 1px solid #777; border-left: 0; }
.net { position: relative; width: 143px; margin: 0 19px; }
.net select { width: 100%; height: 40px; appearance: none; background: transparent; border: 1px solid #e000a0; color: #e000a0; font-weight: 800; padding: 0 9px; border-radius: 0; }
.net svg { position: absolute; right: 6px; top: 17px; pointer-events: none; }
.wallet { width: 198px; background: #fff; color: #111; font-size: 15px; font-weight: 300; padding-bottom: 2px; border-radius: 1px; }

main { padding: 48px 49px 0 48px; display: flex; flex-direction: column; gap: 33px; }
.card { background: #202530; border: 1px solid #e3008c; border-image: linear-gradient(100deg, #e0004d, #e000a0 25%, #e000a0 75%, #e0004d) 1; box-shadow: 0 0 16px rgba(224, 0, 150, .6); padding: 0 20px 7px; }
.card-head { display: flex; align-items: center; height: 66px; padding-top: 2px; border-bottom: 2px solid #e3008c; }
.card-head.big { height: 79px; padding-top: 6px; }
h1, h2, h3 { margin: 0; }
h1 { font-size: 33px; font-weight: 900; line-height: 40px; }
h1 span { font-weight: 400; }
h2 { font-size: 25px; font-weight: 900; }
h3 { font-size: 20px; font-weight: 400; line-height: 24px; padding: 13px 0 4px; }
.badge { margin-left: 12px; background: #48c78e; color: #15251d; font-size: 11px; font-weight: 600; line-height: 18px; padding: 0 8px; border-radius: 9px; }
.format { position: relative; margin-left: auto; }
.format select { width: 137px; height: 27px; appearance: none; border: 1px solid #fff; border-radius: 0; background: transparent; font-size: 12px; font-weight: 600; padding: 0 8px; display: block; }
.format svg { position: absolute; right: 6px; top: 10px; pointer-events: none; }
.fold { margin-left: 19px; margin-right: 3px; width: 18px; height: 18px; }
.card-head h2 + .fold { margin-left: auto; }
.split { display: grid; grid-template-columns: 1fr 1fr; }
dl { margin: 0; padding: 6px 0 8px; display: grid; grid-template-columns: 298px 1fr; align-content: start; line-height: 29px; }
dl + dl { border-left: 1px solid #777; padding-left: 16px; }
dt { font-weight: 400; }
dd { margin: 0; font-weight: 500; }
.tall { height: 43px; }
.fee { height: 31px; }
small { font-size: 11px; font-weight: 400; line-height: 1; }
.grey { font-size: 12px; color: #777; }
.date { margin-left: 12px; }
.hash { font: 10px/13px "Liberation Mono", monospace; color: #777; padding: 10px 28px 0 0; }
.blue { color: #1e90ae; margin-left: 8px; }
.none { color: #777; font-weight: 400; }
.h { color: #aaa; font-size: 13px; line-height: 1; font-weight: 400; font-style: normal; }

.transfers { border-collapse: collapse; table-layout: fixed; width: 100%; margin-bottom: 13px; }
.transfers th, .transfers td { padding: 0; text-align: left; white-space: nowrap; }
.transfers th { font-size: 12px; font-weight: 400; line-height: 24px; color: #aaa; padding-bottom: 1px; }
.transfers td { height: 28px; font-weight: 500; }
.c1 { width: 105px; } .c2 { width: 115px; } .c3 { width: 66px; } .c4 { width: 42px; }
.c5 { width: 69px; } .c6 { width: 107px; } .c7 { width: 62px; }
.transfers .red { color: #ff5577; }
.transfers .green { color: #2fc48a; }
.transfers .dim { opacity: .45; }
.transfers .usd { font-size: 11px; color: #1b9cc0; font-weight: 400; }
.transfers .note { font-size: 11px; }

.scrollbar { width: 16px; background: #f1f1f1; display: flex; flex-direction: column; align-items: center; padding: 6px 0; gap: 6px; }
.track { flex: 1; width: 100%; padding: 0 1px; }
.thumb { height: 50%; background: #c1c1c1; }
.spark { position: absolute; right: 16px; top: 351px; width: 33px; height: 32px; background: #fff; border-radius: 16px 0 0 16px; }
.face { position: absolute; right: 24px; top: 690px; width: 24px; height: 24px; border-radius: 3px; background: linear-gradient(135deg, #6e7180 55%, #5a3f8c); }

/* Taskbar */
.taskbar { flex: none; height: 40px; display: flex; background: linear-gradient(90deg, #30292a, #2f2627 45%, #3a2b27 67%, #382f2f 80%, #2a2526); }
.start { width: 48px; }
.tasksearch { width: 288px; display: flex; align-items: center; background: #f2f2f2; border: 1px solid #c9c9c9; padding: 0 5px 0 11px; gap: 12px; }
.tasksearch input { flex: 1; min-width: 0; border: 0; padding: 0; outline: 0; background: none; font-size: 14px; color: #222; }
.tasksearch input::placeholder { color: #333; opacity: 1; }
.apps { display: flex; gap: 1px; padding-left: 1px; }
.apps button { width: 48px; position: relative; }
.apps .open::after { content: ""; position: absolute; left: 4px; right: 4px; bottom: 0; height: 2px; background: #76b9ed; }
.apps .current { background: #5b5251; }
.apps .current::after { left: 0; right: 0; }
.wa b, .notif b { position: absolute; right: 2px; bottom: 4px; width: 20px; height: 20px; border-radius: 50%; border: 1px solid #999; background: #2d2829; color: #fff; font-size: 11px; line-height: 18px; text-align: center; }
.tray { margin-left: auto; display: flex; align-items: center; font-size: 14px; padding-right: 4px; border-right: 1px solid #777; margin-right: 4px; }
.weather { display: flex; align-items: center; gap: 8px; margin-right: 16px; }
.tray button { width: 32px; height: 40px; }
.clock { width: 66px; display: flex; flex-direction: column; align-items: center; font-size: 12px; line-height: 22px; }
.tray .notif { position: relative; width: 44px; }
```
